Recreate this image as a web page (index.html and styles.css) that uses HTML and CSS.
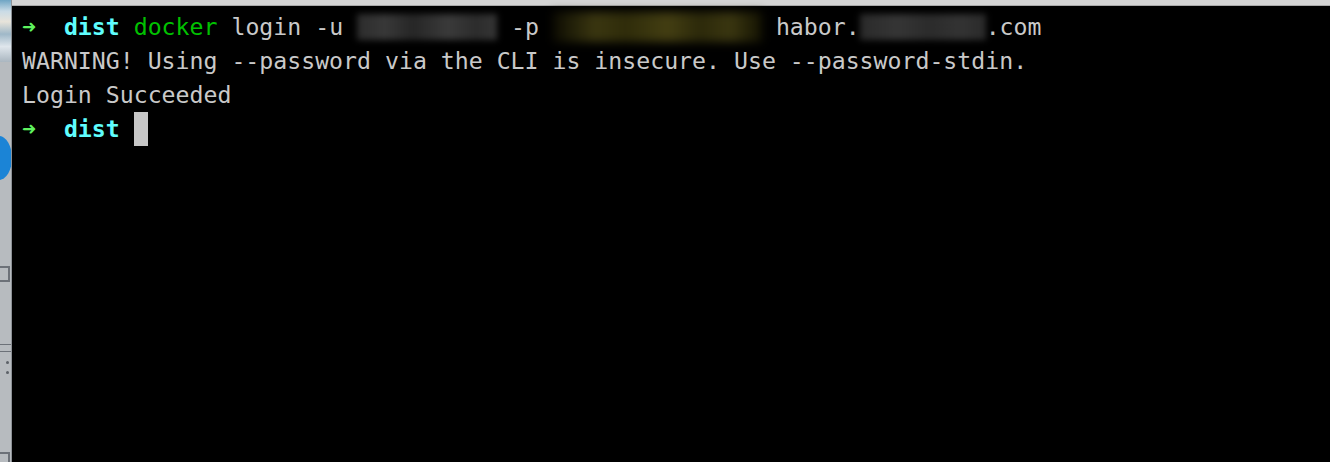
FILE: index.html
```html
<!DOCTYPE html>
<html>
<head>
<meta charset="utf-8">
<link rel="stylesheet" href="styles.css">
</head>
<body>
<div class="screen">
  <div class="desk">
    <div class="desk-photo"></div>
    <div class="desk-blue"></div>
    <div class="desk-box desk-box1"></div>
    <div class="desk-line desk-line1"></div>
    <div class="desk-line desk-line2"></div>
    <div class="desk-dot desk-dot1"></div>
    <div class="desk-dot desk-dot2"></div>
    <div class="desk-box desk-box2"></div>
  </div>
  <div class="window">
    <div class="titlebar"></div>
    <div class="term">
      <div class="line"><span class="arrow">➜</span>  <span class="dir">dist</span> <span class="cmd">docker</span> login -u <span class="blur blur-user"></span> -p <span class="blur blur-pass"></span> habor.<span class="blur blur-host"></span>.com</div>
      <div class="line">WARNING! Using --password via the CLI is insecure. Use --password-stdin.</div>
      <div class="line">Login Succeeded</div>
      <div class="line"><span class="arrow">➜</span>  <span class="dir">dist</span> <span class="cursor"> </span></div>
    </div>
  </div>
</div>
</body>
</html>
```

FILE: styles.css
```css
html, body {
  margin: 0;
  padding: 0;
  background: #000;
}
.screen {
  display: flex;
  width: 1330px;
  height: 462px;
  overflow: hidden;
}
.desk {
  position: relative;
  width: 12px;
  flex: none;
  background: #b7bbbf;
  border-right: 1px solid #8d9196;
  box-sizing: border-box;
  overflow: hidden;
}
.desk-photo {
  height: 62px;
  background: linear-gradient(180deg, #6fa5c4 0%, #c9dbe6 18%, #e7e3da 35%, #9fb8c8 55%, #dfe6ec 75%, #aab6c0 100%);
}
.desk-blue {
  position: absolute;
  left: -14px;
  top: 136px;
  width: 26px;
  height: 44px;
  border-radius: 50%;
  background: #1b84d6;
}
.desk-box {
  position: absolute;
  left: -2px;
  width: 8px;
  height: 12px;
  border: 2px solid #6c7178;
}
.desk-box1 { top: 266px; }
.desk-box2 { top: 452px; height: 14px; }
.desk-line {
  position: absolute;
  left: 0;
  width: 12px;
  height: 1px;
  background: #6c7178;
}
.desk-line1 { top: 344px; }
.desk-line2 { top: 351px; }
.desk-dot {
  position: absolute;
  left: 6px;
  width: 3px;
  height: 3px;
  border-radius: 50%;
  background: #5c6168;
}
.desk-dot1 { top: 361px; }
.desk-dot2 { top: 371px; }
.window {
  flex: 1;
  display: flex;
  flex-direction: column;
}
.titlebar {
  height: 5px;
  background: #d4d4d4;
  border-bottom: 1px solid #a9a9a9;
  flex: none;
}
.term {
  flex: 1;
  background: #000;
  padding: 4px 0 0 10px;
  font-family: "DejaVu Sans Mono", "Liberation Mono", monospace;
  font-size: 23.2px;
  line-height: 34px;
  color: #c9c9c9;
}
.line {
  height: 34px;
  white-space: pre;
}
.arrow { color: #5ff35f; font-weight: bold; }
.dir { color: #5ffdfd; font-weight: bold; }
.cmd { color: #00c200; }
.blur {
  display: inline-block;
  vertical-align: top;
  height: 26px;
  margin-top: 4px;
  filter: blur(3px);
}
.blur-user {
  width: 140px;
  background: linear-gradient(90deg, #2c2c2c 0%, #383838 20%, #262626 40%, #3a3a3a 65%, #2c2c2c 85%, #353535 100%);
}
.blur-pass {
  width: 209px;
  height: 30px;
  margin-top: 2px;
  filter: blur(5px);
  background: linear-gradient(90deg, #0d0c02 0%, #3a3610 20%, #2f2c0a 35%, #433e12 55%, #2c290a 70%, #3a3610 85%, #141302 100%);
}
.blur-host {
  width: 126px;
  background: linear-gradient(90deg, #2a2a2a 0%, #353535 30%, #2b2b2b 55%, #333333 80%, #2a2a2a 100%);
}
.cursor {
  display: inline-block;
  width: 14px;
  height: 34px;
  vertical-align: top;
  background: #c7c7c7;
}
```
